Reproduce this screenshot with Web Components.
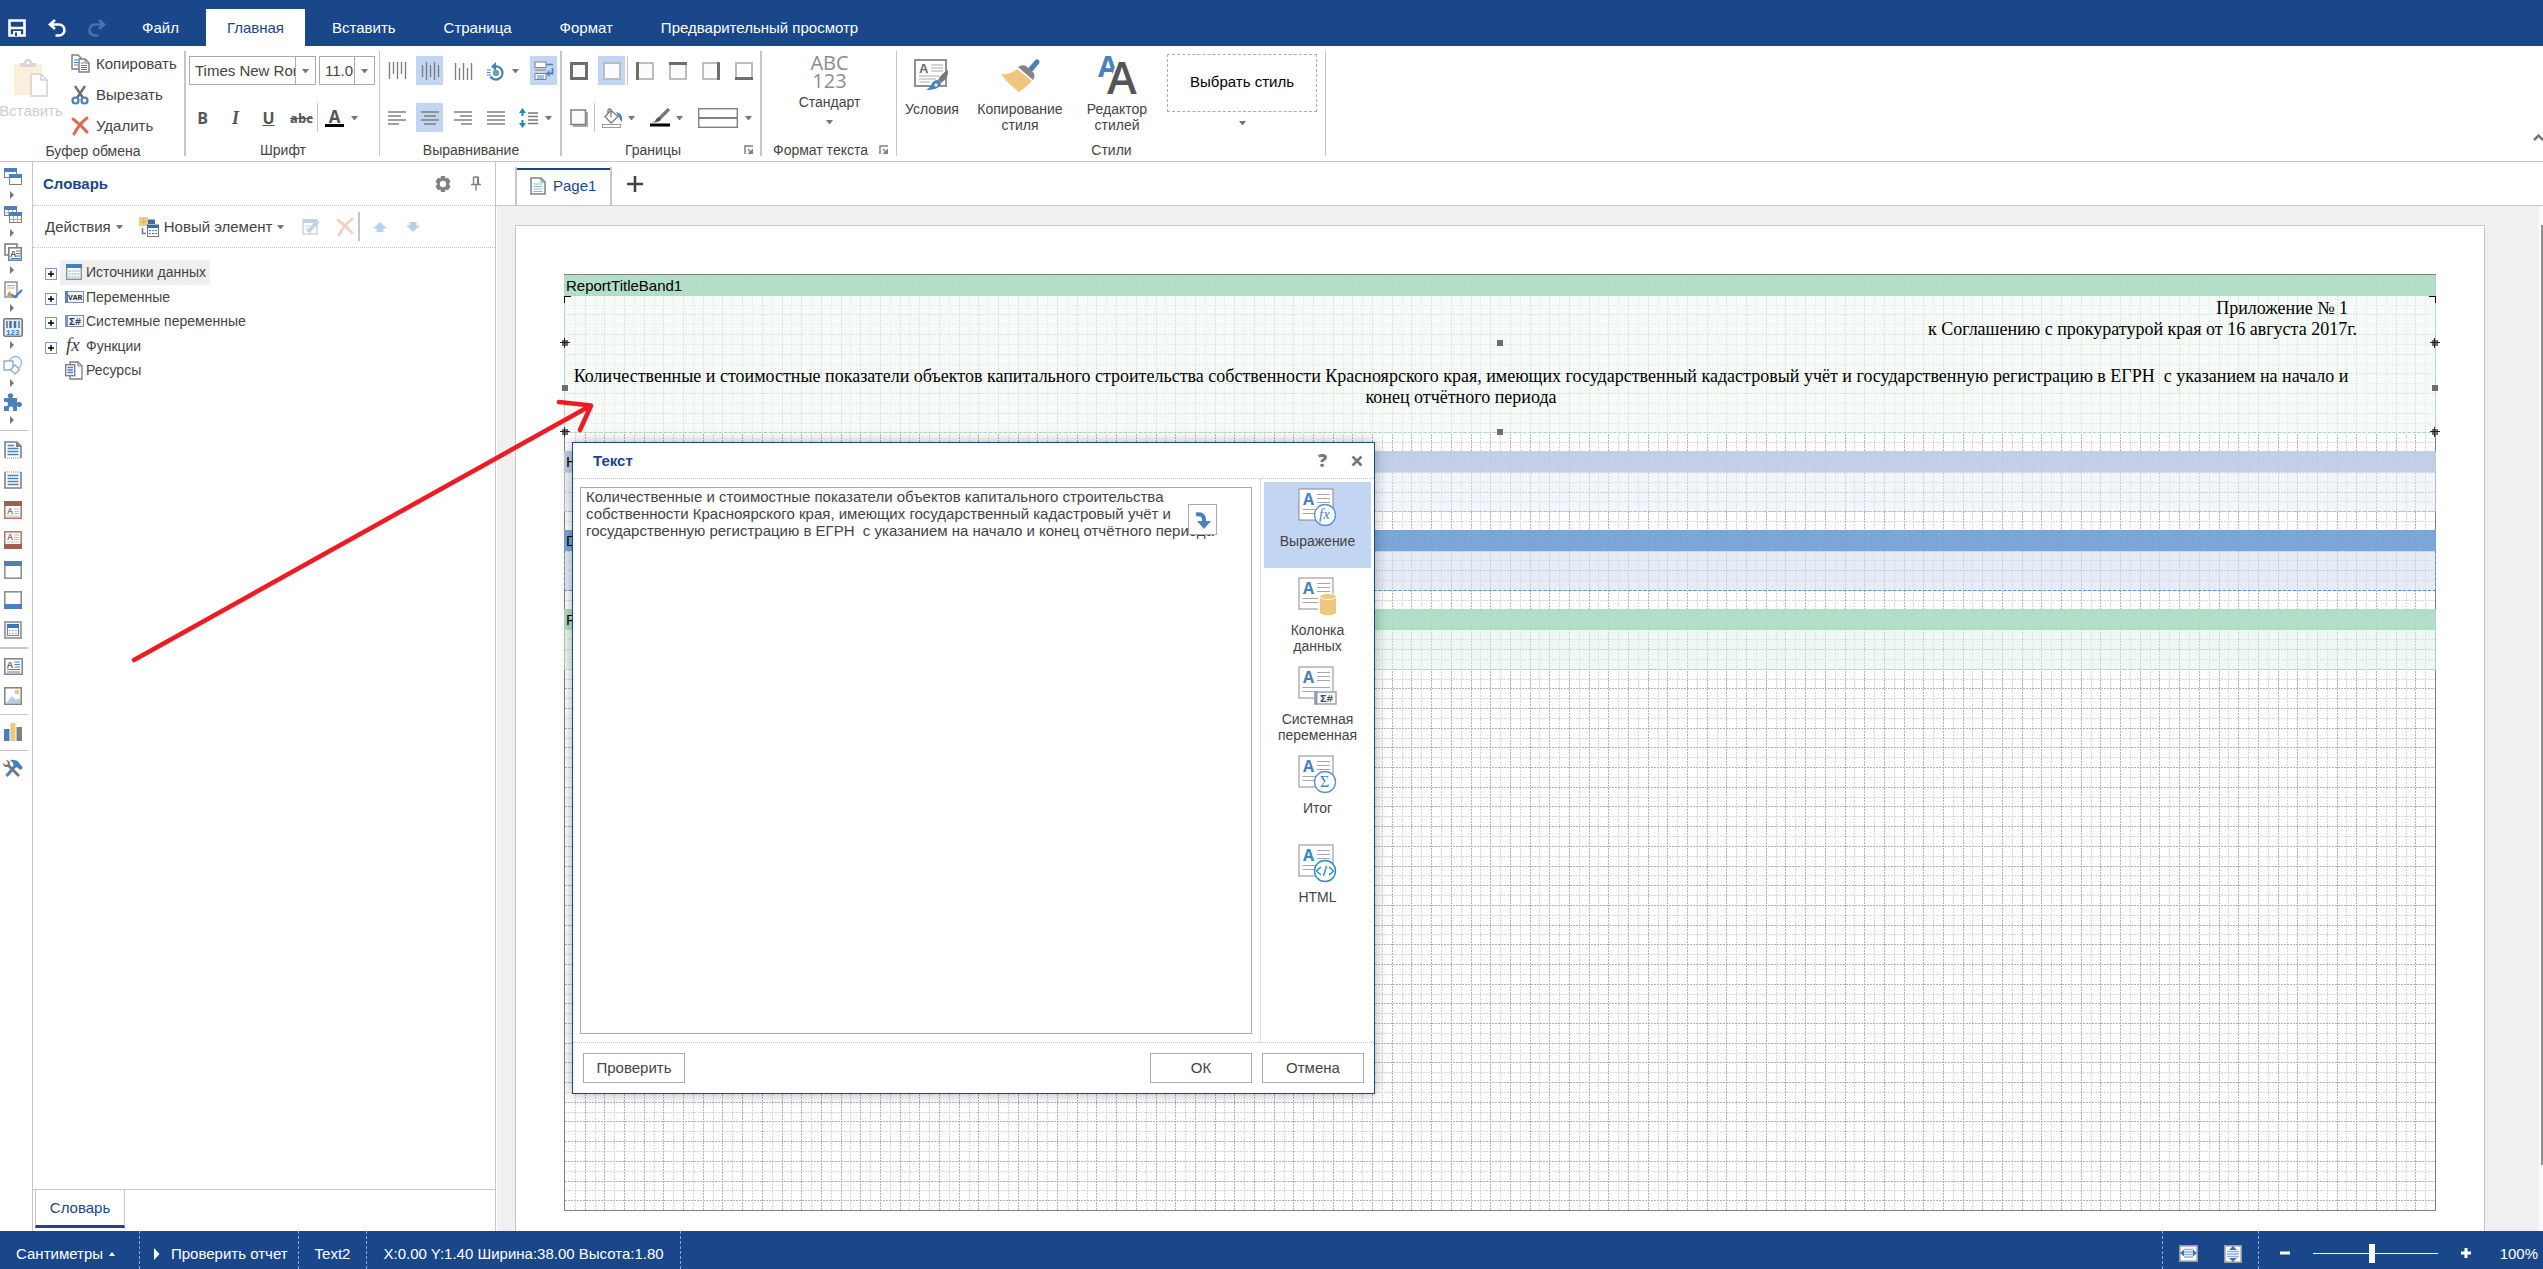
<!DOCTYPE html>
<html lang="ru">
<head>
<meta charset="utf-8">
<title>Report Designer</title>
<style>
html,body{height:100%;margin:0}
body{font:14px/16px "Liberation Sans",Arial,sans-serif;color:#444;background:#fff}
</style>
</head>
<body>
<report-designer></report-designer>
<script>
const BLUE='#19478a', GRAY='#808080', SKY='#4a81bb';

const box=(l,t,r,b)=>{
  const s=(on,x1,y1,x2,y2)=>`<path d="M${x1} ${y1}L${x2} ${y2}" stroke="${on?'#6e6e6e':'#bdbdbd'}" stroke-width="${on?3:2}"/>`;
  return `<rect x="1" y="1" width="16" height="16" fill="#fcfcfc" stroke="#bdbdbd" stroke-width="2"/>`
   +(l?s(1,1.5,0,1.5,18):'')+(t?s(1,0,1.5,18,1.5):'')+(r?s(1,16.5,0,16.5,18):'')+(b?s(1,0,16.5,18,16.5):'');
};
const vbars=(a)=>a.map(([y1,y2],i)=>`<path d="M${1.5+i*4} ${y1}V${y2}" stroke="#808080" stroke-width="1.4"/>`).join('');
const hbars=(a)=>a.map(([x1,x2],i)=>`<path d="M${x1} ${3+i*4}H${x2}" stroke="#777" stroke-width="1.4"/>`).join('');
const txt=(x,y,s,f,c,t,extra='')=>`<text x="${x}" y="${y}" font-size="${s}" font-family="${f}" fill="${c}" ${extra}>${t}</text>`;
const card=(blue)=>`<rect x="1" y="1" width="34" height="31" fill="#fff" stroke="#8a8a8a"/>`
  +txt(5,17,16,'Open Sans',blue,'A','font-weight="700"')
  +`<path d="M19 6.500H32M19 10.500H32M19 14.500H32M4.500 21.500H32M4.500 25.500H20" stroke="#a8a8a8"/>`;
const miniTable=(x,y,w,h)=>`<rect x="${x+.5}" y="${y+.5}" width="${w-1}" height="${h-1}" fill="#fff" stroke="#808080"/><rect x="${x}" y="${y}" width="${w}" height="4" fill="${SKY}"/>`;
const page=(c)=>`<path d="M1 1H11L15 5V17H1Z" fill="#fff" stroke="#808080" stroke-width="1.500"/><path d="M11 1V5H15" fill="none" stroke="#808080"/><path d="M3.500 7H12.500M3.500 9.500H12.500M3.500 12H12.500M3.500 14.500H12.500" stroke="${c}"/>`;

const ICONS={
 save:[18,18,`<path d="M1.500 1.500H16.500V16.500H1.500Z" fill="none" stroke="#fff" stroke-width="2.600"/><path d="M2 9H16" stroke="#fff" stroke-width="2.500"/><path d="M5 12H13V17H5Z" fill="#fff"/><path d="M7 13.500H9V17H7Z" fill="#1a4789"/>`],
 undo:[18,18,`<path d="M7 1L2 5.500L7 10M2.500 5.500H11A5.500 5.500 0 0 1 11 16.500H7.500" fill="none" stroke="#fff" stroke-width="2.600"/>`],
 redo:[18,18,`<path d="M11 1L16 5.500L11 10M15.500 5.500H7A5.500 5.500 0 0 0 7 16.500H10.500" fill="none" stroke="#4f73a8" stroke-width="2.600"/>`],
 paste:[34,38,`<rect x="0" y="5" width="28" height="31" fill="#fbefdb"/><path d="M6 8V4H10Q10 0 14 0T18 4H22V8Z" fill="#d6d6d6"/><circle cx="14" cy="4" r="1.500" fill="#fff"/><path d="M17 15H27L33 21V37H17Z" fill="#fff" stroke="#d2d2d2" stroke-width="1.600"/><path d="M27 15V21H33" fill="none" stroke="#d2d2d2" stroke-width="1.600"/>`],
 copy:[19,19,`<path d="M1 1H7L10 4V15H1Z" fill="#fff" stroke="#808080" stroke-width="1.500"/><path d="M3 6H7M3 8.500H7M3 11H7" stroke="${SKY}"/><path d="M8 5H14L18 9V18H8Z" fill="#fff" stroke="#808080" stroke-width="1.500"/><path d="M14 5V9H18" fill="none" stroke="#808080"/><path d="M10 9H13M10 11.500H16M10 13.500H16M10 15.500H16" stroke="${SKY}"/>`],
 cut:[18,20,`<path d="M4 1L12 13M14 1L6 13" stroke="#6e6e6e" stroke-width="2.400"/><circle cx="4.500" cy="15.500" r="3" fill="none" stroke="${SKY}" stroke-width="2.200"/><circle cx="13.500" cy="15.500" r="3" fill="none" stroke="${SKY}" stroke-width="2.200"/>`],
 del:[18,18,`<path d="M2 2Q9 7 16 15M16 1Q8 7 3 17" fill="none" stroke="#dd6b51" stroke-width="3" stroke-linecap="round"/>`],
 vtop:[18,18,vbars([[0,17],[0,12],[0,17],[0,12],[0,17]])],
 vmid:[18,18,vbars([[3,15],[0,18],[3,15],[0,18],[3,15]])],
 vbot:[18,18,vbars([[1,18],[6,18],[1,18],[6,18],[1,18]])],
 rotate:[18,18,`<circle cx="9" cy="11" r="3.200" fill="#6aa88d"/><path d="M8 4.500A6.500 6.500 0 1 1 3.500 14.500" fill="none" stroke="${SKY}" stroke-width="2.400"/><path d="M9 0V9L4 4.500Z" fill="${SKY}"/><path d="M0 8H4M0 10.500H3.500M0 13H4" stroke="${SKY}"/>`],
 wrap:[20,20,`<rect x="1" y="1" width="11" height="5.500" fill="#fff" stroke="#808080"/><path d="M12 3.500H19" stroke="${SKY}" stroke-width="1.500"/><path d="M1 9H12M1 18.500V12.500H12V18.500Z" fill="#fff" stroke="#808080"/><path d="M3 15H10M3 17H10" stroke="${SKY}"/><path d="M18.500 7V12.500H14" fill="none" stroke="${SKY}" stroke-width="1.800"/><path d="M15.500 9L12 12.500L15.500 16Z" fill="${SKY}"/>`],
 hleft:[18,18,hbars([[0,18],[0,13],[0,18],[0,11]])],
 hcenter:[18,18,hbars([[0,18],[3,15],[0,18],[3,15]])],
 hright:[18,18,hbars([[0,18],[6,18],[0,18],[7,18]])],
 hjust:[18,18,hbars([[0,18],[0,18],[0,18],[0,18]])],
 spacing:[19,20,`<path d="M3.500 2V8M3.500 12V18" stroke="#1a8ab8" stroke-width="2"/><path d="M0 5L3.500 0L7 5ZM0 15L3.500 20L7 15Z" fill="#1a8ab8"/><path d="M9 5H19M9 8.500H19M9 12H19M9 15.500H19" stroke="#777" stroke-width="1.300"/>`],
 ball:[18,18,box(1,1,1,1)], bnone:[18,18,box(0,0,0,0)], bleft:[18,18,box(1,0,0,0)], btop:[18,18,box(0,1,0,0)], bright:[18,18,box(0,0,1,0)], bbottom:[18,18,box(0,0,0,1)],
 shadow:[18,18,`<path d="M3 17H17V3" fill="none" stroke="#aaa" stroke-width="2"/><rect x="1" y="1" width="14.500" height="14.500" fill="#fcfcfc" stroke="#808080" stroke-width="1.500"/>`],
 fill:[20,20,`<path d="M3 8.500L9 2.500L16 8.500L9 15Z" fill="#fff" stroke="#808080" stroke-width="1.300"/><path d="M9 9V3Q9 1 7.500 1T6 3V6" fill="none" stroke="#777" stroke-width="1.300"/><path d="M14 4Q19 5 20 9V14Q18 13 17 9Z" fill="${SKY}"/><rect x=".5" y="16.500" width="18" height="3" fill="#fff" stroke="#999"/>`],
 pen:[20,19,`<path d="M19 1L10 10L8 12" stroke="#777" stroke-width="3.200"/><path d="M9 9L11 12Q7 15 2 14.500Q6 13 6 11Z" fill="#555"/><rect x="0" y="15.500" width="20" height="3" fill="#000"/>`],
 lines:[40,20,`<rect x=".7" y=".7" width="38.600" height="18.600" fill="#fff" stroke="#808080" stroke-width="1.400"/><path d="M1 10H39" stroke="#808080" stroke-width="2"/>`],
 cond:[36,34,`<rect x="1" y="1" width="31" height="26" fill="#fff" stroke="#909090" stroke-width="2"/>${txt(5,14,13,'Liberation Sans','#666','A','font-weight="700"')}<path d="M17 6H29M17 9H29M17 12H29M5 17H26M5 20H22M5 23H16" stroke="#aaa"/><path d="M34 11Q35 19 27 24L24 21Q28 14 34 11Z" fill="#777"/><path d="M24 21L27 24Q26 31 12 31Q17 28 18 24Q20 21 24 21Z" fill="${SKY}"/><circle cx="22" cy="26" r="1.800" fill="#dbe7f4"/>`],
 brush:[38,34,`<path d="M36 3L30 10" stroke="${SKY}" stroke-width="5" stroke-linecap="round"/><path d="M17 8Q21 5 25 7L32 13Q35 17 32 21Z" fill="#858585"/><path d="M16 10L31 22Q23 30 18 33Q6 24 0 15Q10 16 16 10Z" fill="#eec67d"/>`],
 styles:[38,40,txt(0,21,29,'Open Sans',SKY,'A','font-weight="700"')+txt(9,38,45,'Open Sans','#555','A','stroke="#fff" stroke-width="4" paint-order="stroke" font-weight="600"')],
 launch:[10,10,`<path d="M1 9V1H9" fill="none" stroke="#808080" stroke-width="1.500"/><path d="M4 4L8 8" stroke="#808080" stroke-width="1.500"/><path d="M9 3.500V9H3.500Z" fill="#808080"/>`],
 up:[10,7,`<path d="M1 6L5.500 1.500L10 6" fill="none" stroke="#777" stroke-width="2.500"/>`],
 gear:[16,16,`<path d="M6 0H10L10.500 2.500L13 1.800L15.500 5.500L13.800 8L15.500 10.500L13 14.200L10.500 13.500L10 16H6L5.500 13.500L3 14.200L.5 10.500L2.200 8L.5 5.500L3 1.800L5.500 2.500ZM8 4.800A3.200 3.200 0 1 0 8 11.200A3.200 3.200 0 1 0 8 4.800Z" fill="#808080" fill-rule="evenodd"/>`],
 pin:[10,15,`<path d="M2.500 1H7.500M2.500 1V8M0 8.500H10M5 9V14.500" fill="none" stroke="#808080" stroke-width="1.400"/><path d="M7 1V8" stroke="#808080" stroke-width="2.200"/>`],
 newitem:[20,20,`<rect x="0" y="0" width="9" height="9" fill="#f0d08c"/><path d="M0 4.500H9M4.500 0V9M1 1L8 8M8 1L1 8" stroke="#e8bd68"/><path d="M9 2.500H16V7H9Z" fill="#3a6da8"/><path d="M3.500 11V16.500H7" fill="none" stroke="#777" stroke-width="1.500"/><rect x="8.500" y="8.500" width="11" height="11" fill="#fff" stroke="#777"/><path d="M8 7.500H20V11H8Z" fill="#3a6da8"/><path d="M10 13.500H18M10 16.500H18" stroke="${SKY}" stroke-dasharray="2 1"/>`],
 edit:[18,18,`<g opacity=".35"><rect x="1" y="2" width="14" height="14" fill="#fff" stroke="#808080" stroke-width="1.500"/><rect x="1" y="1" width="14" height="4" fill="${SKY}"/><path d="M3 8H9M3 11H7" stroke="${SKY}"/><path d="M16 3L6 14" stroke="${SKY}" stroke-width="4"/></g>`],
 delx:[18,18,`<path d="M2 2Q9 7 16 15M16 1Q8 7 3 17" fill="none" stroke="#f3cfc6" stroke-width="2.800" stroke-linecap="round"/>`],
 aup:[14,10,`<path d="M7 0L14 6.500H10.500V10H3.500V6.500H0Z" fill="#b3d4ef"/>`],
 adown:[14,10,`<path d="M7 10L14 3.500H10.500V0H3.500V3.500H0Z" fill="#b3d4ef"/>`],
 plus:[12,12,`<rect x=".5" y=".5" width="11" height="11" fill="#fdfdfd" stroke="#7c9cc4"/><path d="M3 6H9M6 3V9" stroke="#000" stroke-width="1.400"/>`],
 source:[16,16,`<rect x=".7" y=".7" width="14.600" height="14.600" fill="#fff" stroke="#909090" stroke-width="1.400"/><rect x="0" y="0" width="16" height="4" fill="${SKY}"/><path d="M2.500 7H13.500M2.500 10H13.500M2.500 13H13.500" stroke="#6a9fd8" stroke-width="1.200" stroke-dasharray="2 1"/>`],
 vars:[19,12,`<rect x=".5" y=".5" width="18" height="11" fill="#eef2fa" stroke="#7a94bb"/><rect x="0" y="0" width="3" height="12" fill="#5b83ba"/>${txt(3,9,8,'Liberation Mono','#333','VAR','font-weight="700"')}`],
 sysvars:[19,12,`<rect x=".5" y=".5" width="18" height="11" fill="#f2f5fa" stroke="#7a8ba8"/><rect x="0" y="0" width="3" height="12" fill="#8295b5"/>${txt(4,10,10,'Liberation Mono','#333f5a','Σ#','font-weight="700"')}`],
 fx:[18,18,txt(1,14,19,'Liberation Serif','#444','fx','font-style="italic"')],
 resource:[18,19,`<path d="M5 1H13L17 5V18H5Z" fill="#fff" stroke="#808080" stroke-width="1.400"/><path d="M13 1V5H17" fill="none" stroke="#808080"/><rect x=".7" y="3.700" width="9" height="11" fill="#fff" stroke="#808080" stroke-width="1.400"/><path d="M2.500 6.500H8M2.500 9H8M2.500 11.500H8" stroke="${SKY}" stroke-width="1.300"/>`],
 bands:[18,18,miniTable(0,0,13,10)+miniTable(5,6,13,11)],
 tables:[18,18,miniTable(0,0,13,10)+`<path d="M1 7H12M4.500 4V9M8.500 4V9" stroke="#aaa"/>`+miniTable(5,6,13,11)+`<path d="M6 13.500H17M9.500 10V16.500M13.500 10V16.500" stroke="#aaa"/>`],
 comps:[18,18,`<rect x="1" y="1" width="12" height="11" fill="#fff" stroke="#808080" stroke-width="1.600"/><rect x="4.800" y="4.800" width="12.400" height="12.400" fill="#fff" stroke="#808080" stroke-width="1.600"/>${txt(6,14,9,'Liberation Sans','#555','A','font-weight="700"')}<path d="M12 8H16M12 10.500H16M12 13H16M7 15.500H16" stroke="${SKY}"/>`],
 sign:[18,18,`<path d="M1 1H13V16H1Z" fill="#fff" stroke="#909090" stroke-width="1.500"/><path d="M3 4.500H11M3 7H11" stroke="#aaa"/><path d="M3 15L5 10L10 15Z" fill="#e98a4b"/><path d="M18 9L11 16L8 14" fill="none" stroke="${SKY}" stroke-width="2.400"/>`],
 barcode:[20,19,`<rect x=".8" y=".8" width="18.400" height="17.400" rx="1.500" fill="#e8eef7" stroke="#777" stroke-width="1.600"/><path d="M4 3V10M16 3V10" stroke="#3f74ad" stroke-width="1.500"/><path d="M7.500 3V10M12 3V10" stroke="#3f74ad" stroke-width="2.500"/>${txt(3,17,7.5,'Liberation Mono','#3f74ad','123','font-weight="700"')}`],
 shapes:[20,19,`<circle cx="12.500" cy="6.500" r="6" fill="#fff" stroke="#9dbbe0" stroke-width="1.400"/><rect x="1" y="5" width="9" height="9" fill="#fff" stroke="#8fa9c8" stroke-width="1.400"/><path d="M12 9L16.500 13.500L12 18L7.500 13.500Z" fill="#fff" stroke="#8fa9c8" stroke-width="1.400"/>`],
 puzzle:[18,18,`<path d="M0 5H5Q3 3 4 1.500Q6.500-1 9 1.500Q10 3 8 5H13V10Q15 8 17 9.500Q19 11.500 17 13.500Q15 15 13 13V18H9Q10 13.500 7 13.500T5 18H0V13Q4 14 4 11T0 9Z" fill="${SKY}"/>`],
 rtitle:[18,18,`<path d="M1 17V1H13L17 5V17" fill="#fff" stroke="#808080" stroke-width="1.600"/><path d="M1 17H17" stroke="#808080" stroke-dasharray="1 1"/><path d="M12 1V6H17Z" fill="#808080"/><path d="M3.500 4.500H10M3.500 7.500H14.500M3.500 10.500H14.500M3.500 13.500H14.500" stroke="${SKY}" stroke-width="1.400"/>`],
 rsummary:[18,18,`<path d="M1 1V17H17V1" fill="#fff" stroke="#808080" stroke-width="1.600"/><path d="M1 1H17" stroke="#808080" stroke-dasharray="1 1"/><path d="M3.500 4.500H14.500M3.500 7.500H14.500M3.500 10.500H14.500M3.500 13.500H14.500" stroke="${SKY}" stroke-width="1.400"/>`],
 phead:[18,18,`<rect x=".8" y=".8" width="16.400" height="16.400" fill="#fff" stroke="#b27d70" stroke-width="1.600"/><rect width="18" height="5" fill="#9c6052"/>${txt(3,13,8.5,'Liberation Sans','#777','A','font-weight="700"')}<path d="M10 8H15M10 10.500H15M10 12.500H15M3 15H15" stroke="#dcbab2"/>`],
 pfoot:[18,18,`<rect x=".8" y=".8" width="16.400" height="16.400" fill="#fff" stroke="#b27d70" stroke-width="1.600"/><rect y="13" width="18" height="5" fill="#9c6052"/>${txt(3,9,8.5,'Liberation Sans','#777','A','font-weight="700"')}<path d="M10 4H15M10 6.500H15M10 8.500H15M3 11H15" stroke="#dcbab2"/>`],
 head:[18,18,`<rect x=".8" y=".8" width="16.400" height="16.400" fill="#fff" stroke="#909090" stroke-width="1.600"/><rect width="18" height="5" fill="${SKY}"/>`],
 foot:[18,18,`<rect x=".8" y=".8" width="16.400" height="16.400" fill="#fff" stroke="#909090" stroke-width="1.600"/><rect y="13" width="18" height="5" fill="${SKY}"/>`],
 data:[18,18,`<rect x="1" y="1" width="16" height="16" fill="#f4f4f4" stroke="#999" stroke-width="1.800"/><rect x="3.500" y="3.500" width="11" height="11" fill="#fff" stroke="#808080"/><rect x="3" y="3" width="12" height="4" fill="#3f74ad"/><path d="M5 9.500H13M5 12.500H13" stroke="#8db3dd" stroke-dasharray="2 1"/>`],
 text:[19,17,`<rect x=".8" y=".8" width="17.400" height="15.400" fill="#fff" stroke="#808080" stroke-width="1.500"/>${txt(2.5,10,9.5,'Liberation Sans','#666','A','font-weight="700"')}<path d="M10.500 4H16M10.500 6.500H16M10.500 9H16M3 11.500H16M3 14H16" stroke="${SKY}" stroke-width="1.200"/>`],
 image:[18,18,`<rect x=".8" y=".8" width="16.400" height="16.400" fill="#fff" stroke="#808080" stroke-width="1.500"/><circle cx="13" cy="5" r="2.400" fill="#eec67d"/><path d="M2 16L8 9L12 13L14.500 11L16 13V16Z" fill="#b7cde6"/>`],
 chart:[18,18,`<rect x="0" y="6" width="5.500" height="12" fill="${SKY}"/><rect x="6.500" y="0" width="5" height="18" fill="#eec67d"/><rect x="12.500" y="4" width="5.500" height="14" fill="#808080"/>`],
 tools:[20,17,`<path d="M12.500 5.500L3.500 16" stroke="${SKY}" stroke-width="3"/><path d="M7 0Q14-1 17 4L20 8L17 10L14.500 7.500L11 7Q11 3 7 0Z" fill="${SKY}"/><path d="M4.500 4.500L16 16" stroke="#777" stroke-width="2.800"/><path d="M0 3L2.500 5L4.500 4.500L5 2.500L3 0Q7 0 7 4Q6.500 7.500 3.500 7Q0 7 0 3Z" fill="#777"/>`],
 page:[16,18,page('#8fb5de')],
 add:[16,16,`<path d="M0 8H16M8 0V16" stroke="#444" stroke-width="2.600"/>`],
 hook:[18,20,`<path d="M2 4.500Q10 3 10 10V13" fill="none" stroke="${SKY}" stroke-width="4"/><path d="M3 11H17L10 19Z" fill="${SKY}"/>`],
 expr:[40,40,card(SKY)+`<circle cx="27" cy="27" r="10.500" fill="#fff" stroke="#5f93cb" stroke-width="1.400"/>${txt(21,31,15,'Liberation Serif',SKY,'fx','font-style="italic"')}`],
 column:[40,40,card(SKY)+`<path d="M21 19V36Q29.500 41 38 36V19Z" fill="#fff" stroke="#fff" stroke-width="2"/><path d="M22 19V36Q30 41 38 36V19Z" fill="#eec67d"/><ellipse cx="30" cy="19.500" rx="8" ry="3" fill="#eec67d" stroke="#fff"/>`],
 sysvar:[40,40,card(SKY)+`<rect x="17" y="26" width="21" height="12" fill="#fff" stroke="#8d9cb8" stroke-width="1.400"/><rect x="16.500" y="25.500" width="3" height="13" fill="#8d9cb8"/>${txt(22,36,11,'Liberation Mono','#3a4a6a','Σ#','font-weight="700"')}`],
 total:[40,40,card(SKY)+`<circle cx="27" cy="27" r="10.500" fill="#fff" stroke="#5f93cb" stroke-width="1.400"/>${txt(22,32,16,'Liberation Serif',SKY,'Σ')}`],
 html:[40,40,card('#2b8cc4')+`<circle cx="27" cy="27" r="10.500" fill="#fff" stroke="#2b8cc4" stroke-width="1.400"/><path d="M23 23L18.500 27L23 31M31 23L35.500 27L31 31M28.500 22L25.500 32" fill="none" stroke="#2b8cc4" stroke-width="1.400"/>`],
 help:[10,14,txt(0,13,18,'Open Sans','#777','?','font-weight="800"')],
 close:[12,12,`<path d="M1.500 1.500L10.500 10.500M10.500 1.500L1.500 10.500" stroke="#777" stroke-width="2.600"/>`],
 fitw:[19,17,`<rect x=".8" y=".8" width="17.400" height="15.400" fill="#fff" stroke="#9a9a9a" stroke-width="1.600"/><path d="M5 4.500H14M4.500 7H14.500M4.500 9.500H14.500M5 12H14" stroke="#8db3dd" stroke-width="1.600"/><path d="M1 8L5 4.500V11.500ZM18 8L14 4.500V11.500Z" fill="#3f74ad"/>`],
 fith:[18,18,`<rect x=".8" y=".8" width="16.400" height="16.400" fill="#fff" stroke="#9a9a9a" stroke-width="1.600"/><path d="M3 6.500H15M3 9H15M3 11.500H15" stroke="#8db3dd" stroke-width="1.500"/><path d="M9 1L13 5H5ZM9 17L13 13H5Z" fill="#3f74ad"/>`],
 minus:[12,12,`<path d="M1 6H11" stroke="#fff" stroke-width="3"/>`],
 more:[12,12,`<path d="M1 6H11M6 1V11" stroke="#fff" stroke-width="3"/>`],
 play:[6,12,`<path d="M0 0L5.500 6L0 12Z" fill="#fff"/>`]
};

const BASE=`*{box-sizing:border-box}
button,input,textarea{font:inherit;color:inherit;background:none;border:0;padding:0;margin:0;outline:0}
.caret{box-sizing:content-box;flex:none;width:1px;height:0;border:3px solid transparent;border-top:4px solid #777;border-bottom:0}`;
function define(name,css,html){
  customElements.define(name,class extends HTMLElement{
    connectedCallback(){
      if(this.shadowRoot)return;
      const t=document.createElement('template');
      t.innerHTML=`<style>${BASE}${css}</style>`+(typeof html==='function'?html(this):html);
      this.attachShadow({mode:'open'}).append(document.importNode(t.content,true));
    }
  });
}
const at=(e,n)=>e.getAttribute(n)||'';

define('ui-icon',`:host{display:inline-flex;flex:none}svg{display:block;overflow:visible}`,e=>{
  const [w,h,s]=ICONS[at(e,'name')];
  return `<svg width="${w}" height="${h}" viewBox="0 0 ${w} ${h}" aria-hidden="true">${s}</svg>`;
});

define('tool-button',`:host{display:flex;flex:none;height:29px}
button{display:flex;align-items:center;height:29px;min-width:27px}
.i{display:flex;justify-content:center;min-width:27px}
.caret{margin:0 3px}
:host([drop]) button{min-width:42px}
:host([wide]) .i{min-width:48px}
:host([on]) button{background:#c2d5f2}`,
e=>`<button aria-label="${at(e,'label')||at(e,'icon')}"><span class="i">${e.hasAttribute('icon')?`<ui-icon name="${at(e,'icon')}"></ui-icon>`:'<slot></slot>'}</span>${e.hasAttribute('drop')?'<span class="caret"></span>':''}</button>`);

define('tool-sep',`:host{display:block;flex:none;width:1px;height:29px;background:#c6c6c6;margin:0 3px 0 2px}`,'');

define('text-button',`:host{display:block}button{display:flex;align-items:center;gap:6px;height:31px;font-size:15px}
.i{display:flex;justify-content:center;width:20px}`,
e=>`<button><span class="i"><ui-icon name="${at(e,'icon')}"></ui-icon></span><slot></slot></button>`);

define('big-button',`:host{display:block;flex:none}
button{display:flex;flex-direction:column;align-items:center;width:100%;gap:5px;line-height:16px}
.i{display:flex;align-items:center;height:40px}`,
e=>`<button><span class="i"><ui-icon name="${at(e,'icon')}"></ui-icon></span><span><slot></slot></span></button>`);

define('ribbon-group',`:host{display:flex;flex:none;flex-direction:column;height:115px;background:linear-gradient(#c6c6c6,#c6c6c6) right center/1px 105px no-repeat}
:host([thick]){background-size:2px 105px}
.c{flex:1}.l{display:flex;height:22px;align-items:center}.l span{flex:1;text-align:center}.l button{width:18px;height:20px;display:flex;align-items:center}`,
e=>`<div class="c"><slot></slot></div><div class="l"><span>${at(e,'label')}</span>${e.hasAttribute('launcher')?'<button aria-label="Параметры"><ui-icon name="launch"></ui-icon></button>':''}</div>`);

define('combo-box',`:host{display:flex;height:29px;border:1px solid #ababab}
input{flex:1;min-width:0;padding-left:5px;font-size:15px;height:27px}
button{width:20px;border-left:1px solid #ababab;display:flex;align-items:center;justify-content:center}`,
e=>`<input aria-label="${at(e,'label')}" value="${at(e,'value')}"><button aria-label="${at(e,'label')}"><span class="caret"></span></button>`);

define('ribbon-tabs',`:host{display:flex;flex:none;height:46px;background:#1a4789;color:#fff;font-size:15px;align-items:flex-end}
.q{display:flex;gap:22px;align-items:center;height:37px;padding-left:8px;margin-right:15px}
.q button{display:flex}
nav{display:flex;gap:6px}
a{color:#fff;text-decoration:none;display:flex;align-items:center;height:37px;padding:0 21px}
a.on{background:#fff;color:${BLUE}}`,
`<div class="q"><button aria-label="Сохранить"><ui-icon name="save"></ui-icon></button><button aria-label="Отменить"><ui-icon name="undo"></ui-icon></button><button aria-label="Вернуть"><ui-icon name="redo"></ui-icon></button></div>
<nav><a href="#">Файл</a><a href="#" class="on">Главная</a><a href="#">Вставить</a><a href="#">Страница</a><a href="#">Формат</a><a href="#">Предварительный просмотр</a></nav>`);

define('ribbon-bar',`:host{display:flex;flex:none;height:116px;border-bottom:1px solid #c6c6c6;background:#fff}
.rows{display:flex;flex-direction:column;gap:18px;padding:10px 4px 0 3px}
.row,.set{display:flex}.set{gap:6px}
.clip{width:186px}.clip .in{display:flex;gap:8px;padding-top:2px}
.paste{width:62px;display:flex;flex-direction:column;align-items:center;gap:6px;padding-top:11px;color:#cdcdcd;font-size:15px}
.font{width:194px}.align{width:182px}.border{width:200px}.fmt{width:135px}.sty{width:429px}
.fmt .in{display:flex;flex-direction:column;align-items:center;padding-top:8px;width:100%}
.abc{font:20px/18px "Open Sans",sans-serif;color:#8d8d8d;margin-bottom:4px}
.fmt .caret{margin-top:10px}
.sty .in{display:flex;gap:10px;padding:10px 0 0 4px}
.pick{display:flex;flex-direction:column;align-items:center;gap:9px;margin-top:-2px}
.pick span:first-child{display:flex;align-items:center;justify-content:center;width:150px;height:58px;padding-bottom:2px;border:1px dashed #ababab;color:#000;font-size:15px}
b,i,u,s{font:700 16px/18px "Open Sans",sans-serif;color:#555}i{font-style:italic;font-family:"Liberation Serif",serif;font-size:18px}s{font-size:13px}
.ca{font:700 17px/15px "Open Sans",sans-serif;color:#555;border-bottom:3px solid #000;width:19px;text-align:center;height:18px}
.fold{margin-left:auto;align-self:flex-end;height:27px;display:flex}`,
`<ribbon-group class="clip" label="Буфер обмена" thick><div class="in"><button class="paste"><ui-icon name="paste"></ui-icon>Вставить</button><div><text-button icon="copy">Копировать</text-button><text-button icon="cut">Вырезать</text-button><text-button icon="del">Удалить</text-button></div></div></ribbon-group>
<ribbon-group class="font" label="Шрифт"><div class="rows"><div class="row" style="gap:3px"><combo-box style="width:127px" label="Шрифт" value="Times New Roman"></combo-box><combo-box style="width:56px" label="Размер" value="11.0"></combo-box></div>
<div class="row"><div class="set"><tool-button label="Полужирный"><b>B</b></tool-button><tool-button label="Курсив"><i>I</i></tool-button><tool-button label="Подчёркнутый"><u style="text-decoration:underline">U</u></tool-button><tool-button label="Зачёркнутый"><s style="text-decoration:line-through">abc</s></tool-button></div><tool-sep></tool-sep><tool-button drop label="Цвет"><span class="ca">A</span></tool-button></div></div></ribbon-group>
<ribbon-group class="align" label="Выравнивание" thick><div class="rows"><div class="set"><tool-button icon="vtop"></tool-button><tool-button icon="vmid" on></tool-button><tool-button icon="vbot"></tool-button><tool-button icon="rotate" drop></tool-button><tool-button icon="wrap" on></tool-button></div>
<div class="set"><tool-button icon="hleft"></tool-button><tool-button icon="hcenter" on></tool-button><tool-button icon="hright"></tool-button><tool-button icon="hjust"></tool-button><tool-button icon="spacing" drop></tool-button></div></div></ribbon-group>
<ribbon-group class="border" label="Границы" launcher thick><div class="rows"><div class="row"><div class="set"><tool-button icon="ball"></tool-button><tool-button icon="bnone" on></tool-button></div><tool-sep></tool-sep><div class="set"><tool-button icon="bleft"></tool-button><tool-button icon="btop"></tool-button><tool-button icon="bright"></tool-button><tool-button icon="bbottom"></tool-button></div></div>
<div class="row"><tool-button icon="shadow"></tool-button><tool-sep></tool-sep><div class="set"><tool-button icon="fill" drop></tool-button><tool-button icon="pen" drop></tool-button><tool-button icon="lines" drop wide></tool-button></div></div></div></ribbon-group>
<ribbon-group class="fmt" label="Формат текста" launcher><button class="in"><span class="abc">ABC<br>123</span><span>Стандарт</span><span class="caret"></span></button></ribbon-group>
<ribbon-group class="sty" label="Стили"><div class="in"><big-button style="width:62px" icon="cond">Условия</big-button><big-button style="width:94px" icon="brush">Копирование<br>стиля</big-button><big-button style="width:80px" icon="styles">Редактор<br>стилей</big-button><button class="pick"><span>Выбрать стиль</span><span class="caret"></span></button></div></ribbon-group>
<button class="fold" aria-label="Свернуть"><ui-icon name="up"></ui-icon></button>`);

define('tool-box',`:host{display:flex;flex:none;flex-direction:column;width:33px;border-right:1px solid #c6c6c6;padding-top:1px}
button{display:flex;flex:none;flex-direction:column;align-items:center;width:26px;height:30px;justify-content:center}
.m{height:37px;justify-content:flex-start}.m:nth-child(even){height:38px}
.m span{display:flex;align-items:center;height:28px}
.m::after{content:"";border:4px solid transparent;border-left:4px solid #777;border-right:0;margin-left:-2px}
hr{flex:none;width:28px;height:1px;border:0;background:#c6c6c6;margin:3px 0 2px}
hr.a{margin:4px 0}
hr.b{height:2px;margin:2px 0}`,
()=>['bands','tables','comps','sign','barcode','shapes','puzzle'].map(n=>`<button class="m" aria-label="${n}"><span><ui-icon name="${n}"></ui-icon></span></button>`).join('')
 +'<hr class="a">'+['rtitle','rsummary','phead','pfoot','head','foot','data'].map(n=>`<button aria-label="${n}"><ui-icon name="${n}"></ui-icon></button>`).join('')
 +'<hr class="b">'+['text','image'].map(n=>`<button aria-label="${n}"><ui-icon name="${n}"></ui-icon></button>`).join('')
 +'<hr><button aria-label="chart"><ui-icon name="chart"></ui-icon></button><hr><button aria-label="tools"><ui-icon name="tools"></ui-icon></button>');

define('tree-item',`:host{display:flex;align-items:center;height:24px;padding-left:12px}
.p{width:12px;display:flex;margin:3px 3px 0 0}
.l{display:flex;align-items:center;height:25px;padding:0 4px 0 5px}
:host([selected]) .l{background:#efefef}
.i{display:flex;justify-content:center;width:18px;margin-right:3px}`,
e=>`<span class="p">${e.hasAttribute('leaf')?'':'<ui-icon name="plus"></ui-icon>'}</span><span class="l"><span class="i"><ui-icon name="${at(e,'icon')}"></ui-icon></span><slot></slot></span>`);

define('dictionary-panel',`:host{display:flex;flex:none;flex-direction:column;width:463px;border-right:1px solid #c6c6c6}
header{display:flex;align-items:center;height:44px;border-bottom:1px dotted #c0c0c0;padding:0 14px 0 10px;gap:20px}
h2{flex:1;margin:0;font-size:15px;color:${BLUE}}
header button,.bar button{display:flex;align-items:center}
.bar{display:flex;align-items:center;height:42px;border-bottom:1px dotted #c0c0c0;padding-left:12px;font-size:15px}
.bar button{gap:5px}
.tree{flex:1;padding-top:12px;display:flex;flex-direction:column}
tree-item:nth-child(odd){margin-bottom:1px}
footer{display:flex;height:42px;border-top:1px solid #c6c6c6;padding-left:2px}
footer a{width:90px;height:38px;border:1px solid #c6c6c6;border-width:0 1px;border-bottom:3px solid ${BLUE};color:${BLUE};text-decoration:none;font-size:15px;display:flex;align-items:center;justify-content:center}`,
`<header><h2>Словарь</h2><button aria-label="Настройки"><ui-icon name="gear"></ui-icon></button><button aria-label="Закрепить"><ui-icon name="pin"></ui-icon></button></header>
<div class="bar"><button>Действия<span class="caret"></span></button><button style="margin-left:16px"><ui-icon name="newitem"></ui-icon><span>Новый элемент</span><span class="caret"></span></button><button aria-label="Изменить" style="margin-left:18px"><ui-icon name="edit"></ui-icon></button><button aria-label="Удалить" style="margin-left:16px"><ui-icon name="delx"></ui-icon></button><tool-sep style="width:2px;margin:0 13px 0 4px"></tool-sep><button aria-label="Вверх"><ui-icon name="aup"></ui-icon></button><button aria-label="Вниз" style="margin-left:19px"><ui-icon name="adown"></ui-icon></button></div>
<div class="tree"><tree-item icon="source" selected>Источники данных</tree-item><tree-item icon="vars">Переменные</tree-item><tree-item icon="sysvars">Системные переменные</tree-item><tree-item icon="fx">Функции</tree-item><tree-item icon="resource" leaf>Ресурсы</tree-item></div>
<footer><a href="#">Словарь</a></footer>`);

define('report-grid',`:host{position:absolute;inset:0;overflow:hidden}svg{display:block;width:100%;height:100%}`,()=>{
  const step=9.8425; let major='',minor='';
  for(let i=1;i<200;i++){
    const p=Math.round(i*step)+.5;
    const v=`M${p} 0V1200`, h=i<120?`M0 ${p}H1960`:'';
    if(i%2)minor+=v+h; else major+=v+h;
  }
  return `<svg aria-hidden="true"><g fill="none" stroke-dasharray="2 1"><path d="${minor}" stroke="#d6d6d6"/><path d="${major}" stroke="#b2b2b2"/></g></svg>`;
});

define('report-band',`:host{display:block;position:relative;margin:0 -1px}
.h{height:21px;padding-left:2px;font-size:15px;line-height:22px;color:#000;background:var(--head)}
.b{position:relative;min-height:40px;background:var(--body);border:1px dashed var(--line);border-top:0}`,
e=>`<div class="h">${at(e,'name')}</div><div class="b"><slot></slot></div>`);

define('size-grip',`:host{position:absolute;width:6px;height:6px;margin:-3px;background:#6d6d6d}
:host([cross])::before{content:"";position:absolute;left:-2px;right:-2px;top:2px;height:1px;background:#222}
:host([cross])::after{content:"";position:absolute;top:-2px;bottom:-2px;left:2px;width:1px;background:#222}`,'');

define('report-text',`:host{display:flex;position:relative;white-space:pre;font:18px/21px "Liberation Serif","Times New Roman",serif;color:#000;overflow:hidden}`,'<slot></slot>');

define('report-page',`:host{display:flex;flex:1;min-width:0;background:#fff;border:1px solid #c6c6c6;border-bottom:0;padding:48px 48px 20px}
.area{position:relative;flex:1;min-width:0;border:1px solid ${GRAY}}
.bands{position:relative;display:flex;flex-direction:column;gap:18px}
.t1{height:47px;padding:2px 78px 0 0;justify-content:flex-end;text-align:right}
.t2{height:89px;padding:0 78px 2px 0;align-items:center;justify-content:center;text-align:center}
.k{position:absolute;top:0;width:7px;height:7px;border:1px solid #000;border-width:1px 0 0 1px;left:-1px}
.k.r{left:auto;right:-1px;border-width:1px 1px 0 0}
.sel{position:absolute;inset:47px 0 0 0}`,
`<div class="area"><report-grid></report-grid><div class="bands">
<report-band name="ReportTitleBand1" style="--head:#aedcc4f0;--body:#f2f9f5b0;--line:#a9d8bf"><report-text class="t1">Приложение № 1  
к Соглашению с прокуратурой края от 16 августа 2017г.</report-text><report-text class="t2">Количественные и стоимостные показатели объектов капитального строительства собственности Красноярского края, имеющих государственный кадастровый учёт и государственную регистрацию в ЕГРН  с указанием на начало и
конец отчётного периода</report-text><span class="k"></span><span class="k r"></span>
<div class="sel"><size-grip cross style="left:0;top:0"></size-grip><size-grip style="left:50%;top:0"></size-grip><size-grip cross style="left:100%;top:0"></size-grip><size-grip style="left:0;top:50%"></size-grip><size-grip style="left:100%;top:50%"></size-grip><size-grip cross style="left:0;top:100%"></size-grip><size-grip style="left:50%;top:100%"></size-grip><size-grip cross style="left:100%;top:100%"></size-grip></div></report-band>
<report-band name="HeaderBand1" style="--head:#becde6f0;--body:#e6edf880;--line:#aebfdd"></report-band>
<report-band name="DataBand1" style="--head:#74a3d6f4;--body:#d3e0f299;--line:#5890cc"></report-band>
<report-band name="ReportSummaryBand1" style="--head:#aedcc4f0;--body:#dff1e880;--line:#a9d8bf"></report-band>
</div></div>`);

define('page-area',`:host{display:flex;flex:1;min-width:0;flex-direction:column}
.tabs{display:flex;height:44px;flex:none;border-bottom:1px solid #c6c6c6;padding:5px 0 0 19px}
.tab{display:flex;align-items:center;gap:7px;width:97px;height:38px;padding-left:13px;border:2px solid #c6c6c6;border-width:0 2px;color:${BLUE};text-decoration:none;font-size:15px;background:linear-gradient(${BLUE},${BLUE}) 0 1px/100% 2px no-repeat}
.tabs button{margin-left:15px;display:flex;align-items:center;height:34px}
.work{flex:1;min-height:0;display:flex;background:#f0f0f0;padding:19px 0 0 18px;margin-left:1px;overflow:hidden}
report-page{margin-right:54px}
.scroll{width:4px;margin-top:-19px;background:#fbfbfb;padding:19px 0 66px 2px;flex:none}
.scroll i{display:block;height:100%;background:#909090}`,
`<div class="tabs"><a class="tab" href="#"><ui-icon name="page"></ui-icon>Page1</a><button aria-label="Добавить страницу"><ui-icon name="add"></ui-icon></button></div>
<div class="work"><report-page></report-page><div class="scroll"><i></i></div></div>`);

define('side-option',`:host{display:block;height:86px;width:107px}
button{width:107px;height:86px;display:flex;flex-direction:column;align-items:center;gap:5px;padding-top:6px;line-height:16px}
:host([on]) button{background:#c2d5f2}`,
e=>`<button><ui-icon name="${at(e,'icon')}"></ui-icon><span><slot></slot></span></button>`);

define('text-dialog',`:host{display:flex;flex-direction:column;position:absolute;left:572px;top:442px;width:803px;height:652px;background:#fff;border:1px solid ${BLUE};box-shadow:0 0 12px rgba(0,0,0,.32)}
header{display:flex;align-items:center;height:36px;border-bottom:1px dotted #c0c0c0;padding:0 11px 0 20px}
h2{flex:1;margin:0;font-size:15px;color:${BLUE}}
header button{display:flex}header button+button{margin-left:23px}
.main{flex:1;display:flex;min-height:0}
.ed{position:relative;flex:1;padding:8px 8px 8px 7px;display:flex}
textarea{flex:1;resize:none;border:1px solid #ababab;padding:0 5px;font-size:15px;line-height:17px;overflow:hidden}
.ins{position:absolute;right:43px;top:25px;width:29px;height:31px;border:1px solid #ababab;background:#fff;display:flex;align-items:center;justify-content:center}
aside{width:114px;border-left:1px dotted #c0c0c0;padding:3px 3px;display:flex;flex-direction:column;gap:3px}
footer{display:flex;height:51px;border-top:1px dotted #c0c0c0;padding:10px 10px 0;gap:10px}
footer button{width:102px;height:30px;border:1px solid #ababab;font-size:15px}
footer button:first-child{margin-right:auto}`,
`<header><h2>Текст</h2><button aria-label="Справка"><ui-icon name="help"></ui-icon></button><button aria-label="Закрыть"><ui-icon name="close"></ui-icon></button></header>
<div class="main"><div class="ed"><textarea aria-label="Текст" spellcheck="false">Количественные и стоимостные показатели объектов капитального строительства собственности Красноярского края, имеющих государственный кадастровый учёт и государственную регистрацию в ЕГРН  с указанием на начало и конец отчётного периода</textarea><button class="ins" aria-label="Вставить выражение"><ui-icon name="hook"></ui-icon></button></div>
<aside><side-option icon="expr" on>Выражение</side-option><side-option icon="column">Колонка<br>данных</side-option><side-option icon="sysvar">Системная<br>переменная</side-option><side-option icon="total">Итог</side-option><side-option icon="html">HTML</side-option></aside></div>
<footer><button>Проверить</button><button>ОК</button><button>Отмена</button></footer>`);

define('status-bar',`:host{display:flex;flex:none;height:38px;background:#1a4789;color:#fff;font-size:15px}
.c{display:flex;align-items:center;padding:7px 16px 0;border-right:1px dashed #8ea6c9}
.c button{display:flex;align-items:center}
.up{border:3px solid transparent;border-bottom:4px solid #fff;border-top:0;margin-left:6px}
.r{margin-left:auto;border-left:1px dashed #8ea6c9;gap:26px}
.z{display:flex;align-items:center;padding:7px 5px 0 20px}
input{appearance:none;width:125px;height:20px;margin:0 22px;background:linear-gradient(#fff,#fff) center/100% 1px no-repeat}
input::-webkit-slider-thumb{appearance:none;width:6px;height:19px;background:#fff}`,
`<div class="c" style="width:140px"><button>Сантиметры<span class="up"></span></button></div>
<div class="c" style="padding:7px 10px 0 14px"><button><ui-icon name="play" style="margin-right:11px"></ui-icon>Проверить отчет</button></div>
<div class="c">Text2</div><div class="c">X:0.00 Y:1.40 Ширина:38.00 Высота:1.80</div>
<div class="c r"><button aria-label="По ширине"><ui-icon name="fitw"></ui-icon></button><button aria-label="По высоте"><ui-icon name="fith"></ui-icon></button></div>
<div class="z"><button aria-label="Уменьшить"><ui-icon name="minus"></ui-icon></button><input type="range" min="0" max="100" value="47" aria-label="Масштаб"><button aria-label="Увеличить"><ui-icon name="more"></ui-icon></button><span style="margin-left:28px">100%</span></div>`);

define('pointer-arrow',`:host{position:absolute;left:0;top:0;pointer-events:none}svg{display:block}`,
`<svg width="610" height="680" aria-hidden="true"><path d="M134 660L590 406M559 402L591 405.500L580 430" fill="none" stroke="#ed1c24" stroke-width="4.600" stroke-linecap="round" stroke-linejoin="round"/></svg>`);

define('report-designer',`:host{display:flex;flex-direction:column;position:relative;height:100vh;overflow:hidden}
.mid{display:flex;flex:1;min-height:0}`,
`<ribbon-tabs></ribbon-tabs><ribbon-bar></ribbon-bar><div class="mid"><tool-box></tool-box><dictionary-panel></dictionary-panel><page-area></page-area></div><status-bar></status-bar><text-dialog></text-dialog><pointer-arrow></pointer-arrow>`);
</script>
</body>
</html>
